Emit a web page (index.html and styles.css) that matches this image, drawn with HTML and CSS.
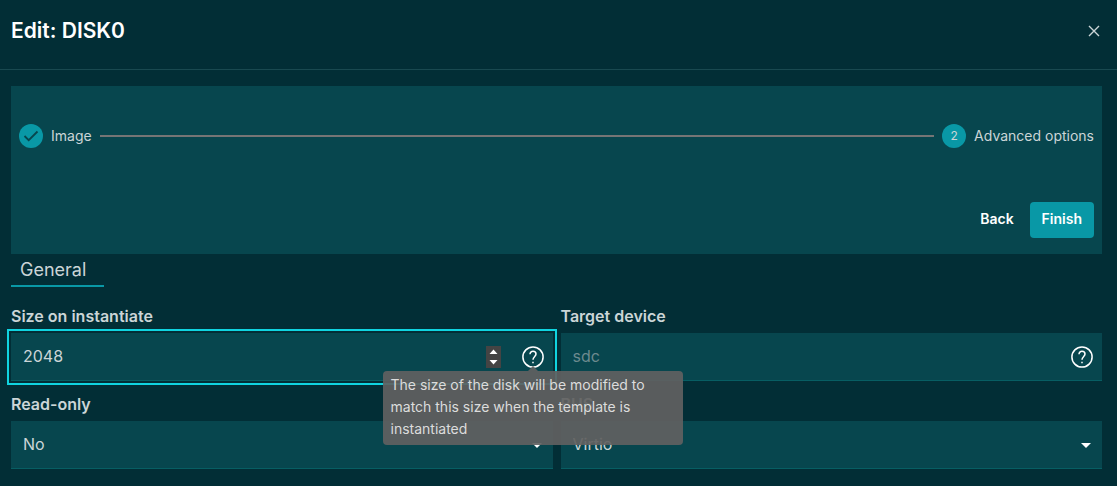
FILE: index.html
```html
<!DOCTYPE html>
<html lang="en">
<head>
<meta charset="utf-8">
<meta name="viewport" content="width=device-width, initial-scale=1">
<title>Edit: DISK0</title>
<link rel="stylesheet" href="styles.css">
</head>
<body>
<header class="header">
  <h1 class="title">Edit: DISK0</h1>
  <button class="close" type="button" aria-label="Close">
    <svg width="12" height="12" viewBox="0 0 12 12" fill="none" stroke="currentColor" stroke-width="1.4"><path d="M1 1l10 10M11 1L1 11"/></svg>
  </button>
</header>
<main class="content">
  <section class="panel">
    <ol class="stepper">
      <li class="step">
        <svg width="24" height="24" viewBox="0 0 24 24" aria-hidden="true"><circle cx="12" cy="12" r="12" fill="#0998a6"/><path d="M5.5 12l4.2 4.2 8.8-8.7" fill="none" stroke="#07464e" stroke-width="1.8"/></svg>
        <span>Image</span>
      </li>
      <li class="connector" aria-hidden="true"></li>
      <li class="step">
        <span class="number">2</span>
        <span>Advanced options</span>
      </li>
    </ol>
    <div class="actions">
      <button class="button" type="button">Back</button>
      <button class="button primary" type="button">Finish</button>
    </div>
  </section>
  <nav class="tabs"><button class="tab" type="button">General</button></nav>
  <form class="form">
    <div class="field">
      <label class="label" for="size">Size on instantiate</label>
      <div class="control focused">
        <input class="input" id="size" type="number" value="2048">
        <svg class="spinner" width="15" height="22" viewBox="0 0 15 22" aria-hidden="true"><path fill="#444" d="M0 0h15v22H0z"/><path fill="#fff" d="M7.5 3.5l4 4.5h-8zM7.5 18.500l4-4.500h-8z"/></svg>
        <span class="help">
          <svg width="22" height="22" viewBox="0 0 22 22" fill="none" stroke="#fff" stroke-width="1.5" aria-hidden="true"><circle cx="11" cy="11" r="10.100"/><path d="M8 8.300C8 6.400 9.300 5.300 11 5.300s3 1.100 3 2.800c0 2.300-3 2.500-3 5.700M11 15.700v1.600"/></svg>
          <span class="tooltip" role="tooltip">The size of the disk will be modified to match this size when the template is instantiated</span>
        </span>
      </div>
    </div>
    <div class="field">
      <label class="label" for="target">Target device</label>
      <div class="control">
        <input class="input" id="target" type="text" placeholder="sdc">
        <span class="help">
          <svg width="22" height="22" viewBox="0 0 22 22" fill="none" stroke="#fff" stroke-width="1.5" aria-hidden="true"><circle cx="11" cy="11" r="10.100"/><path d="M8 8.300C8 6.400 9.300 5.300 11 5.300s3 1.100 3 2.800c0 2.300-3 2.500-3 5.700M11 15.700v1.600"/></svg>
        </span>
      </div>
    </div>
    <div class="field">
      <label class="label" for="readonly">Read-only</label>
      <div class="control">
        <select class="input select" id="readonly"><option>No</option><option>Yes</option></select>
        <svg class="arrow" width="10" height="5" viewBox="0 0 10 5" aria-hidden="true"><path fill="#fff" d="M0 0h10L5 5z"/></svg>
      </div>
    </div>
    <div class="field">
      <label class="label" for="bus">BUS</label>
      <div class="control">
        <select class="input select" id="bus"><option>Virtio</option></select>
        <svg class="arrow" width="10" height="5" viewBox="0 0 10 5" aria-hidden="true"><path fill="#fff" d="M0 0h10L5 5z"/></svg>
      </div>
    </div>
  </form>
</main>
</body>
</html>
```

FILE: styles.css
```css
* {
  box-sizing: border-box;
}

body {
  margin: 0;
  background: #022e36;
  color: #cbd5d7;
  font-family: Inter, "Liberation Sans", sans-serif;
  font-size: 14px;
}

button,
input,
select {
  margin: 0;
  padding: 0;
  border: 0;
  background: none;
  color: inherit;
  font: inherit;
}

svg {
  display: block;
  flex: none;
}

.header {
  display: flex;
  align-items: center;
  justify-content: space-between;
  padding: 16px 16px 24px 11px;
  border-bottom: 1px solid #194950;
}

.title {
  margin: 0;
  color: #fff;
  font-size: 21px;
  font-weight: 600;
  line-height: 29px;
}

.close {
  padding: 1px;
}

.content {
  padding: 16px 15px 16px 11px;
}

.panel {
  padding: 38px 8px 16px;
  background: #07464e;
}

.stepper {
  display: flex;
  align-items: center;
  gap: 8px;
  margin: 0 0 54px;
  padding: 0;
  list-style: none;
}

.step {
  display: flex;
  align-items: center;
  gap: 8px;
  line-height: 24px;
}

.connector {
  flex: 1;
  height: 2px;
  background: #757575;
}

.number {
  width: 24px;
  border-radius: 50%;
  background: #0998a6;
  font-size: 12px;
  text-align: center;
}

.actions {
  display: flex;
  justify-content: flex-end;
  gap: 4px;
}

.button {
  padding: 0 12px 2px;
  border-radius: 4px;
  color: #fff;
  font-weight: 600;
  line-height: 34px;
}

.primary {
  background: #0998a6;
}

.tabs {
  display: flex;
}

.tab {
  padding: 0 18px 0 9px;
  border-bottom: 2px solid #0998a6;
  font-size: 18px;
  line-height: 31px;
}

.form {
  display: grid;
  grid-template-columns: 1fr 1fr;
  gap: 12px 8px;
  margin-top: 18px;
}

.label {
  display: block;
  font-size: 16px;
  font-weight: 600;
  line-height: 22px;
  padding-bottom: 6px;
}

.control {
  display: flex;
  align-items: center;
  height: 48px;
  padding-right: 9px;
  border-bottom: 1px solid #075e63;
  background: #07464e;
}

.focused {
  outline: 2px solid #10d4e0;
  outline-offset: 2px;
}

.input {
  flex: 1;
  min-width: 0;
  height: 100%;
  padding: 0 0 2px 12px;
  outline: 0;
  font-size: 16px;
  appearance: none;
}

.input[type="number"] {
  appearance: textfield;
}

.input::placeholder {
  color: #6d8a8e;
  opacity: 1;
}

.spinner {
  margin-right: 21px;
}

.select {
  margin-right: -21px;
  padding-right: 33px;
}

.arrow {
  margin-top: 2px;
  margin-right: 2px;
  pointer-events: none;
}

.help {
  position: relative;
}

.tooltip {
  position: absolute;
  z-index: 1;
  top: 25px;
  left: -139px;
  width: 300px;
  padding: 3px 8px 5px;
  border-radius: 4px;
  background: rgba(97, 97, 97, 0.92);
  color: #dcdcdc;
  line-height: 22px;
}

.tooltip::before {
  content: "";
  position: absolute;
  bottom: 100%;
  left: 50%;
  margin-left: -5px;
  border: 5px solid transparent;
  border-top: 0;
  border-bottom-color: rgba(97, 97, 97, 0.92);
}
```
